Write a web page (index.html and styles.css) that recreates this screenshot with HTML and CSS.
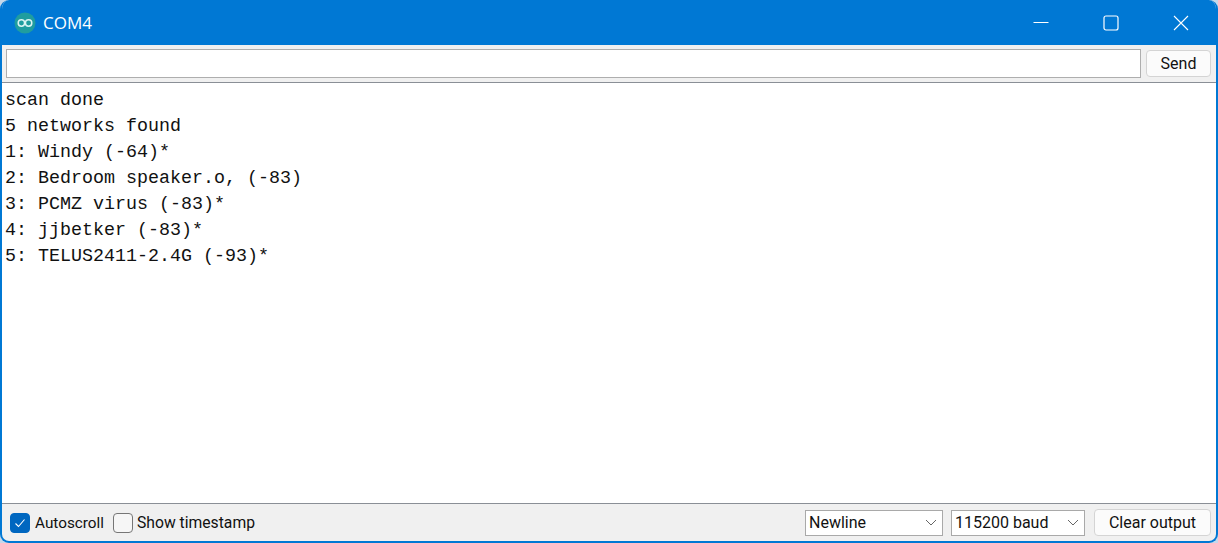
FILE: index.html
```html
<!DOCTYPE html>
<html lang="en">
<head>
<meta charset="utf-8">
<title>COM4</title>
<link rel="stylesheet" href="styles.css">
</head>
<body>
<div class="window">
  <header class="titlebar">
    <svg class="logo" width="22" height="22" viewBox="0 0 22 22">
      <circle cx="11" cy="11" r="10.5" fill="#1f9d9f"/>
      <circle cx="7.4" cy="11" r="3.2" fill="none" stroke="#d9f3f3" stroke-width="1.5"/>
      <circle cx="14.6" cy="11" r="3.2" fill="none" stroke="#d9f3f3" stroke-width="1.5"/>
    </svg>
    <span class="title">COM4</span>
    <div class="controls">
      <svg class="ctl" width="16" height="16" viewBox="0 0 16 16"><path d="M0.5 7.5H15.5" stroke="#fff" stroke-width="1" fill="none"/></svg>
      <svg class="ctl" width="16" height="16" viewBox="0 0 16 16"><rect x="1" y="1" width="14" height="14" rx="2" stroke="#fff" stroke-width="1.2" fill="none"/></svg>
      <svg class="ctl" width="16" height="16" viewBox="0 0 16 16"><path d="M1 1L15 15M15 1L1 15" stroke="#fff" stroke-width="1.1" fill="none"/></svg>
    </div>
  </header>
  <div class="sendbar">
    <div class="input"></div>
    <button class="btn send">Send</button>
  </div>
  <main class="output">
    <div>scan done</div>
    <div>5 networks found</div>
    <div>1: Windy (-64)*</div>
    <div>2: Bedroom speaker.o, (-83)</div>
    <div>3: PCMZ virus (-83)*</div>
    <div>4: jjbetker (-83)*</div>
    <div>5: TELUS2411-2.4G (-93)*</div>
  </main>
  <footer class="statusbar">
    <span class="check checked">
      <svg width="12" height="10" viewBox="0 0 12 10"><path d="M1.5 5.5L4.5 8.5L10.5 1.5" stroke="#fff" stroke-width="1.1" fill="none"/></svg>
    </span>
    <span class="label auto">Autoscroll</span>
    <span class="check"></span>
    <span class="label">Show timestamp</span>
    <div class="spacer"></div>
    <div class="select newline"><span>Newline</span><svg width="12" height="7" viewBox="0 0 12 7"><path d="M1 1L6 6L11 1" stroke="#666" stroke-width="1" fill="none"/></svg></div>
    <div class="select baud"><span>115200 baud</span><svg width="12" height="7" viewBox="0 0 12 7"><path d="M1 1L6 6L11 1" stroke="#666" stroke-width="1" fill="none"/></svg></div>
    <button class="btn clear">Clear output</button>
  </footer>
</div>
</body>
</html>
```
FILE: styles.css
```css
* { box-sizing: border-box; }
html, body { margin: 0; padding: 0; background: #c5d8ea; }
.window {
  width: 1218px;
  height: 543px;
  display: flex;
  flex-direction: column;
  background: #f0f0f0;
  border: 2px solid #0078d4;
  border-top: 0;
  border-radius: 9px;
  overflow: hidden;
  font-family: Roboto, "Open Sans", sans-serif;
  color: #111;
}
.titlebar {
  height: 45px;
  flex: none;
  margin: 0 -2px;
  background: #0078d4;
  color: #fff;
  display: flex;
  align-items: center;
  padding-left: 14px;
}
.logo { flex: none; }
.title { margin-left: 7px; font-family: "Open Sans", sans-serif; font-size: 17px; }
.controls {
  margin-left: auto;
  display: flex;
  align-items: center;
  padding-right: 29px;
}
.ctl { display: block; margin-left: 54px; }
.sendbar {
  height: 38px;
  flex: none;
  display: flex;
  align-items: center;
  padding: 0 5px 0 4px;
  gap: 5px;
  border-bottom: 1px solid #8a8f96;
}
.input {
  flex: 1;
  height: 29px;
  background: #fff;
  border: 1px solid #aeaeae;
}
.btn {
  font: inherit;
  font-size: 16px;
  color: #111;
  background: #fbfbfb;
  border: 1px solid #d4d4d4;
  border-radius: 4px;
  height: 27px;
  padding: 0;
}
.send { width: 65px; }
.output {
  flex: 1;
  background: #fff;
  padding: 5px 0 0 3px;
  font-family: "Liberation Mono", monospace;
  font-size: 18.33px;
  line-height: 26px;
  color: #111;
}
.statusbar {
  height: 38px;
  flex: none;
  display: flex;
  align-items: center;
  border-top: 1px solid #8a8f96;
  padding: 0 5px 0 8px;
  font-size: 16px;
}
.check {
  width: 20px;
  height: 20px;
  flex: none;
  border: 1px solid #767676;
  border-radius: 4px;
  background: #f6f6f6;
  display: flex;
  align-items: center;
  justify-content: center;
}
.checked { background: #0067c0; border-color: #0067c0; }
.label { margin-left: 4px; font-size: 15.7px; }
.auto { margin-left: 5px; margin-right: 9px; font-size: 15.3px; }
.spacer { flex: 1; }
.select {
  height: 26px;
  background: #fff;
  border: 1px solid #a9a9a9;
  display: flex;
  align-items: center;
  justify-content: space-between;
  padding: 0 5px 0 3px;
  margin-right: 8px;
}
.newline { width: 138px; }
.baud { width: 134px; margin-right: 9px; }
.clear { width: 117px; }
```
